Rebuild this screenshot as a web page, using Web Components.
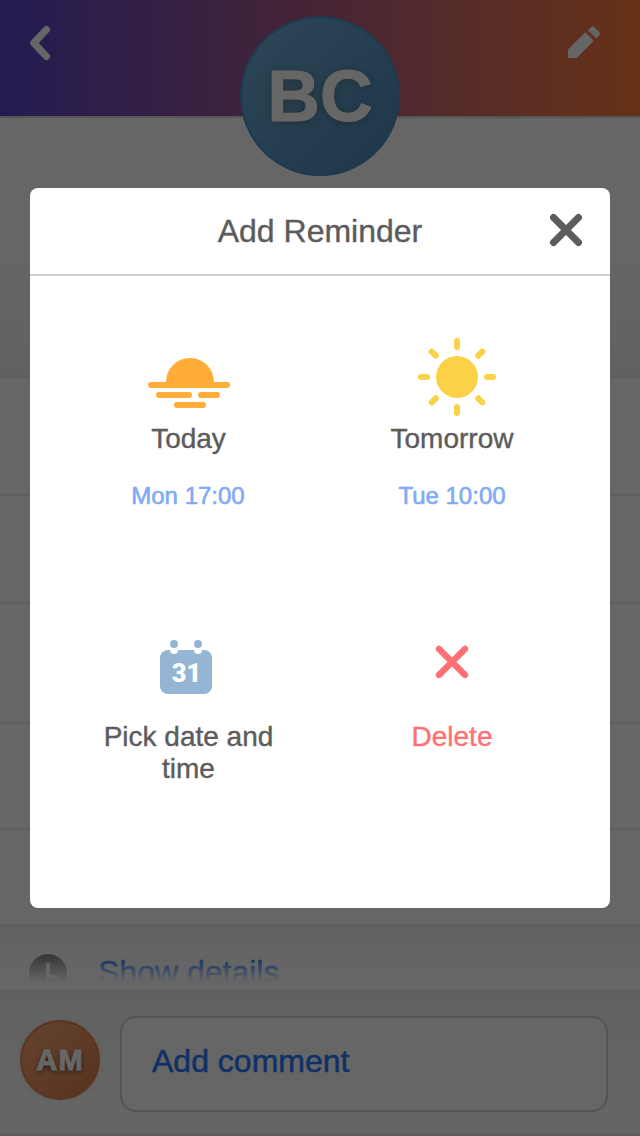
<!DOCTYPE html>
<html lang="en">
<head>
<meta charset="utf-8">
<title>Add Reminder</title>
<style>
body { margin: 0; font-family: "Liberation Sans", Arial, sans-serif; }
</style>
</head>
<body>
<contact-screen></contact-screen>
<script>
function define(name, html) {
  const template = document.createElement('template');
  template.innerHTML = html;
  customElements.define(name, class extends HTMLElement {
    constructor() {
      super();
      this.attachShadow({ mode: 'open' }).append(template.content.cloneNode(true));
    }
  });
}

define('user-avatar', `
<style>
:host { display: flex; align-items: center; justify-content: center; box-sizing: border-box; border-radius: 50%; color: #fff; font-weight: bold; }
</style>
<slot></slot>`);

define('top-bar', `
<style>
:host { display: flex; justify-content: space-between; box-sizing: border-box; height: 118px; padding: 20px 30px 0;
  background: linear-gradient(90deg, #5844cd 0%, #9155a0 33%, #b45c84 50%, #d66e68 72%, #ff7b3a 100%) padding-box; border-bottom: 2px solid #d9d7d8; }
svg { width: 44px; height: 44px; display: block; }
</style>
<svg viewBox="0 0 44 44"><path d="M16.4 9.6 3.8 23 16.4 36.4" fill="none" stroke="#fff" stroke-width="7.2" stroke-linecap="round" stroke-linejoin="round"/></svg>
<svg viewBox="0 0 44 44"><path fill="#fff" d="M2 29.5V38h8.7L27.7 20.7 19.3 12.3ZM22 10.2l3.3-3.4q1.2-1.2 2.5 0L33.3 12.300q1.4 1.400 0 2.700L30.300 18.200Z"/></svg>`);

define('list-row', `
<style>
:host { display: block; box-sizing: border-box; border-bottom: 2px solid #ecebeb; background: #fff; }
</style>
<slot></slot>`);

define('details-row', `
<style>
:host { display: flex; box-sizing: border-box; height: 66px; padding: 27px 29px 0; gap: 31px; overflow: hidden; position: relative; border-bottom: 2px solid #edecec;
  background: linear-gradient(#f2f6f4, #fff); }
svg { width: 38px; height: 38px; flex: none; }
span { font-size: 32px; line-height: 38px; color: #2070ff; white-space: nowrap; -webkit-text-stroke: .5px; }
.fade { position: absolute; inset: 30px 0 0; background: linear-gradient(rgba(255,255,255,0), #fff 26px); }
</style>
<svg viewBox="0 0 38 38"><circle cx="19" cy="20" r="19" fill="#8f8d88"/><path d="M19 12v12h8" fill="none" stroke="#fff" stroke-width="4" stroke-linecap="round" stroke-linejoin="round"/></svg>
<span>Show details</span>
<div class="fade"></div>`);

define('comment-bar', `
<style>
:host { display: flex; box-sizing: border-box; height: 144px; padding: 24px 32px 22px 20px; gap: 20px; border-bottom: 2px solid #ece5e8;
  background: linear-gradient(#f0f4f2, #fdfdfd 75%); }
user-avatar { width: 80px; height: 80px; margin-top: 4px; border: 2px solid #e5834c; background: linear-gradient(135deg, #fda877, #d9804b);
  font-size: 29px; letter-spacing: 1.2px; -webkit-text-stroke: 1px; text-shadow: 0 2px 5px rgba(0,0,0,.65); box-shadow: 0 1px 8px rgba(0,0,0,.08); }
.field { flex: 1; box-sizing: border-box; height: 96px; border: 2px solid #d8cace; border-radius: 16px; background: #fff; padding: 0 30px 6px;
  display: flex; align-items: center; font-size: 32px; color: #2878ff; -webkit-text-stroke: .5px; }
</style>
<user-avatar>AM</user-avatar>
<div class="field">Add comment</div>`);

define('reminder-option', `
<style>
:host { display: block; height: 298px; text-align: center; color: #5c5c5c; }
.icon { height: 101px; display: flex; justify-content: center; }
.label { font-size: 28px; line-height: 32px; padding: 0 40px 0 calc(40px + var(--label-shift, 0px)); -webkit-text-stroke: .4px; }
.time { font-size: 24px; line-height: 28px; margin-top: 27px; color: #80aaf6; -webkit-text-stroke: .6px; }
</style>
<div class="icon"><slot name="icon"></slot></div>
<div class="label"><slot></slot></div>
<div class="time"><slot name="time"></slot></div>`);

define('reminder-dialog', `
<style>
:host { display: block; box-sizing: border-box; width: 580px; height: 720px; border-radius: 8px; background: #fff; overflow: hidden; }
header { display: grid; grid-template-columns: 88px 1fr 88px; align-items: center; justify-items: center; height: 86px; border-bottom: 2px solid #d5d1d3; }
h1 { grid-column: 2; margin: 0; font-size: 32px; font-weight: normal; color: #5c5c5c; -webkit-text-stroke: .4px; }
header svg { width: 40px; height: 40px; position: relative; top: -1px; }
.grid { display: grid; grid-template-columns: 264px 264px; padding: 46px 26px 0; }
.grid svg { width: 100px; height: 100px; }
reminder-option:nth-child(odd) { --label-shift: 1px; }
.delete-label { color: #ff6f73; }
</style>
<header><h1>Add Reminder</h1>
<svg viewBox="0 0 40 40"><path d="M7.500 7.500 32.500 32.500M32.500 7.500 7.500 32.500" stroke="#5c5c5c" stroke-width="7" stroke-linecap="round"/></svg></header>
<div class="grid">
<reminder-option>
  <svg slot="icon" viewBox="0 0 100 100"><path fill="#ffac38" d="M28 62V60a24 24 0 0 1 48 0V62Z"/><path d="M13 63H89M21 73H51M63 73H79M39 83H65" stroke="#ffac38" stroke-width="6" stroke-linecap="round"/></svg>
  Today<span slot="time">Mon 17:00</span>
</reminder-option>
<reminder-option>
  <svg slot="icon" viewBox="0 0 100 100"><circle cx="55" cy="55" r="21" fill="#fbd247"/><path d="M55 19v6M55 85v6M19 55h6M85 55h6M29.700 29.700l4 4M80.300 29.700l-4 4M29.700 80.300l4-4M80.300 80.300l-4-4" stroke="#fbd247" stroke-width="6" stroke-linecap="round"/></svg>
  Tomorrow<span slot="time">Tue 10:00</span>
</reminder-option>
<reminder-option>
  <svg slot="icon" viewBox="0 0 100 100"><rect x="22" y="30" width="52" height="44" rx="8" fill="#94b6d4"/><path d="M36 24v6M60 24v6" stroke="#fff" stroke-width="8" stroke-linecap="round"/><circle cx="36" cy="24" r="4" fill="#94b6d4"/><circle cx="60" cy="24" r="4" fill="#94b6d4"/><text x="48.500" y="62" text-anchor="middle" font-family="Roboto, sans-serif" font-weight="900" font-size="25.500" fill="#fff">31</text></svg>
  Pick date and time
</reminder-option>
<reminder-option>
  <svg slot="icon" viewBox="0 0 100 100"><path d="M37 29 63 55M63 29 37 55" stroke="#ff6f73" stroke-width="6.400" stroke-linecap="round"/></svg>
  <span class="delete-label">Delete</span>
</reminder-option>
</div>`);

define('contact-screen', `
<style>
:host { display: flex; flex-direction: column; position: relative; width: 640px; height: 1136px; overflow: hidden; background: #fff; }
top-bar, list-row, details-row, comment-bar { flex: none; }
.summary { height: 260px; background: linear-gradient(#fff 0%, #fff 50%, #f0f4f2 100%); }
user-avatar { position: absolute; left: 240px; top: 16px; width: 160px; height: 160px; border: 2px solid #4b8fc4;
  background: linear-gradient(135deg, #70b2d8, #498ab9); font-size: 73px; -webkit-text-stroke: 1px; text-shadow: 0 1px 8px rgba(90,60,40,.5); padding-bottom: 1px; }
.backdrop { position: absolute; inset: 0; background: rgba(0,0,0,.6); padding: 188px 30px 0; }
</style>
<top-bar></top-bar>
<list-row class="summary"></list-row>
<list-row style="height:118px"></list-row>
<list-row style="height:108px"></list-row>
<list-row style="height:120px"></list-row>
<list-row style="height:106px"></list-row>
<list-row style="height:96px"></list-row>
<details-row></details-row>
<comment-bar></comment-bar>
<user-avatar>BC</user-avatar>
<div class="backdrop"><reminder-dialog></reminder-dialog></div>`);
</script>
</body>
</html>
